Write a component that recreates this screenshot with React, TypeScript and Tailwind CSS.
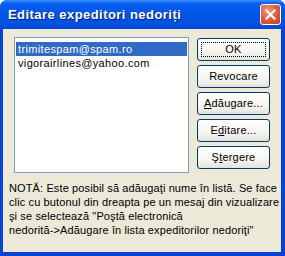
const FONT = "font-['Tahoma','Liberation_Sans',sans-serif] tracking-[0.2px]";

function XPButton({ children, isDefault = false }: { children: React.ReactNode; isDefault?: boolean }) {
  return (
    <button
      className={`${FONT} relative h-[23px] w-[73px] rounded-[3px] border border-[#003C74] bg-[linear-gradient(to_bottom,#FFFFFF_0%,#F6F5F0_60%,#E3E2DA_100%)] text-[11px] leading-none text-black`}
    >
      {isDefault && (
        <span className="absolute inset-[3px] border border-dotted border-black" />
      )}
      {children}
    </button>
  );
}

export default function App() {
  const emails = ['trimitespam@spam.ro', 'vigorairlines@yahoo.com'];

  return (
    <div className="flex h-[256px] w-[285px] flex-col overflow-hidden rounded-t-[7px] bg-[#0843D4]">
      {/* Title bar */}
      <div className="flex h-[29px] shrink-0 items-center justify-between bg-[linear-gradient(to_bottom,#3D93FF_0%,#0A5EF3_12%,#0055E5_45%,#0052E0_80%,#0047D6_100%)] pl-[8px] pr-[4px]">
        <span className="font-['Liberation_Sans',sans-serif] text-[13px] font-bold tracking-[0.45px] text-white [text-shadow:1px_1px_0_#0A1F70]">
          Editare expeditori nedoriți
        </span>
        <div className="flex h-[21px] w-[21px] items-center justify-center rounded-[3px] border border-white bg-[radial-gradient(circle_at_35%_30%,#F09A80_0%,#E5603F_45%,#C8391B_100%)]">
          <svg width="11" height="11" viewBox="0 0 11 11">
            <path d="M1.5 1.5 L9.5 9.5 M9.5 1.5 L1.5 9.5" stroke="white" strokeWidth="2.2" strokeLinecap="square" />
          </svg>
        </div>
      </div>

      {/* Body */}
      <div className={`${FONT} mb-[4px] ml-[3px] mr-[4px] flex flex-1 flex-col bg-[#ECE9D8] pt-[8px] text-[11px] text-black`}>
        <div className="flex">
          <div className="ml-[11px] h-[136px] w-[175px] border border-[#7F9DB9] bg-white p-[1px]">
            {emails.map((e, i) => (
              <div
                key={e}
                className={`h-[14px] pl-[2px] leading-[14px] tracking-[0.35px] ${i === 0 ? 'mt-[3px] bg-[#316AC5] text-white' : ''}`}
              >
                {e}
              </div>
            ))}
          </div>
          <div className="ml-[8px] mt-[1px] flex flex-col gap-[4px]">
            <XPButton isDefault>OK</XPButton>
            <XPButton>Revocare</XPButton>
            <XPButton>
              <u>A</u>dăugare...
            </XPButton>
            <XPButton>
              E<u>d</u>itare...
            </XPButton>
            <XPButton>
              Ş<u>t</u>ergere
            </XPButton>
          </div>
        </div>

        <p className="mt-[8px] whitespace-nowrap pl-[6px] leading-[14px] tracking-[0.12px]">
          NOTĂ: Este posibil să adăugaţi nume în listă. Se face
          <br />
          clic cu butonul din dreapta pe un mesaj din vizualizare
          <br />
          şi se selectează "Poştă electronică
          <br />
          nedorită-&gt;Adăugare în lista expeditorilor nedoriţi"
        </p>
      </div>
    </div>
  );
}
